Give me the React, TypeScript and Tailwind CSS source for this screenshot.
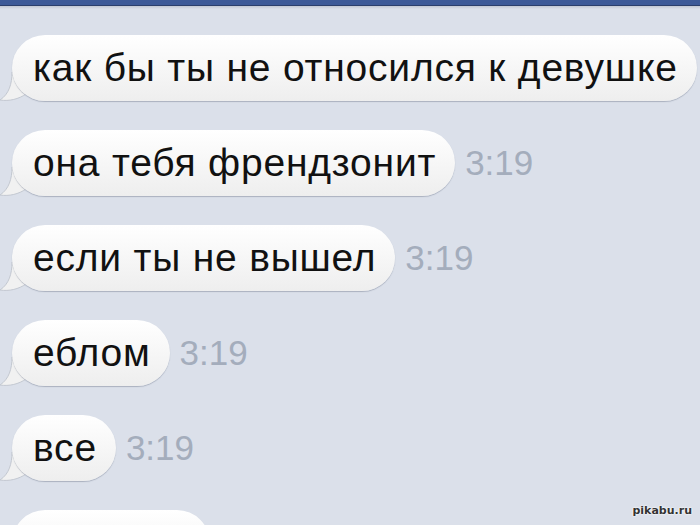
const messages = [
  { text: "как бы ты не относился к девушке", time: "" },
  { text: "она тебя френдзонит", time: "3:19" },
  { text: "если ты не вышел", time: "3:19" },
  { text: "еблом", time: "3:19" },
  { text: "все", time: "3:19" },
];

function Tail() {
  return (
    <svg
      className="absolute left-[-12px] bottom-[-1px]"
      width="34"
      height="30"
      viewBox="0 0 34 30"
    >
      <path
        d="M12 0 C12 12 9 22 0 28 C9 29.5 19 27 26 22 L34 22 L34 0 Z"
        fill="#f1f1f1"
        stroke="#c3c8d1"
        strokeWidth="1"
      />
    </svg>
  );
}

function Bubble({ text, time }: { text: string; time: string }) {
  return (
    <div className="flex items-center gap-[10px]">
      <div className="relative ml-[12px]">
        <Tail />
        <div className="relative h-[66px] flex items-center pl-[21px] pr-[19px] rounded-full bg-gradient-to-b from-white to-[#eeeeee] shadow-[0_1px_1px_rgba(110,120,140,0.45)] whitespace-nowrap text-[39px] tracking-[0.8px] text-[#111] font-['Liberation_Sans',Arial,sans-serif]">
          {text}
        </div>
      </div>
      {time && (
        <span className="text-[35px] text-[#a4adbc] font-['Liberation_Sans',Arial,sans-serif]">
          {time}
        </span>
      )}
    </div>
  );
}

export default function App() {
  return (
    <div className="relative w-[700px] h-[525px] overflow-hidden bg-[#dbe0ea]">
      <div className="h-[6px] bg-[#3d5a98] border-b border-[#2b3f6c]" />
      <div className="h-[3px] bg-gradient-to-b from-[#c2c8d3] to-[#dbe0ea]" />
      <div className="flex flex-col gap-[29px] pt-[26px]">
        {messages.map((m, i) => (
          <Bubble key={i} text={m.text} time={m.time} />
        ))}
        <div className="relative ml-[12px]">
          <Tail />
          <div className="relative h-[66px] w-[198px] rounded-full bg-gradient-to-b from-white to-[#eeeeee] shadow-[0_1px_1px_rgba(110,120,140,0.45)]" />
        </div>
      </div>
      <div className="absolute right-[8px] bottom-[6px] text-[11px] font-bold text-[#333] font-['DejaVu_Sans',sans-serif] [text-shadow:0_0_2px_#fff,0_0_2px_#fff]">
        pikabu.ru
      </div>
    </div>
  );
}
